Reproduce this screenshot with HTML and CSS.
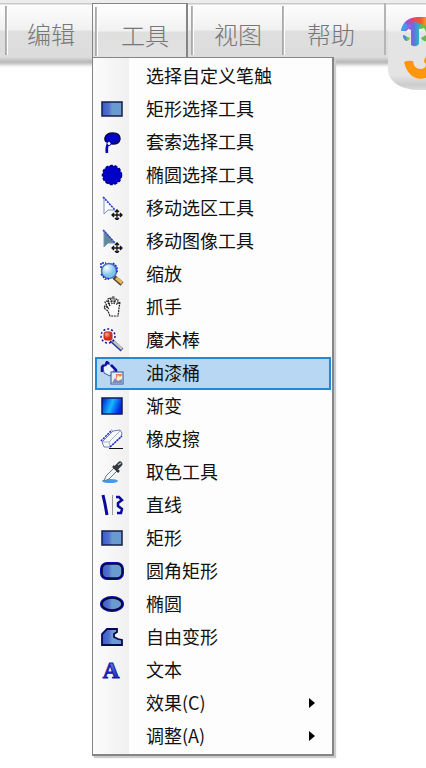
FILE: index.html
```
<!DOCTYPE html>
<html lang="zh-CN">
<head>
<meta charset="utf-8">
<title>工具</title>
<link rel="stylesheet" href="styles.css">
</head>
<body>
<svg class="defs" aria-hidden="true">
  <defs>
    <linearGradient id="blue"><stop offset="0" stop-color="#2f5fd0"/><stop offset=".35" stop-color="#5670cc"/><stop offset=".5" stop-color="#6a9bd0"/><stop offset="1" stop-color="#6a9bd0"/></linearGradient>
    <linearGradient id="fill" x2="1" y2=".3"><stop offset="0" stop-color="#0018d8"/><stop offset=".55" stop-color="#18b8ff"/><stop offset="1" stop-color="#0028e0"/></linearGradient>
    <radialGradient id="lens" cx=".35" cy=".3"><stop offset="0" stop-color="#fff"/><stop offset="1" stop-color="#7ec4f2"/></radialGradient>
    <radialGradient id="ball" cx=".35" cy=".3"><stop offset="0" stop-color="#ffb08a"/><stop offset="1" stop-color="#d82818"/></radialGradient>
    <linearGradient id="trunk" x2="1" y2="0"><stop offset="0" stop-color="#b060e0"/><stop offset=".4" stop-color="#6a6ae0"/><stop offset=".7" stop-color="#2fb0c8"/><stop offset="1" stop-color="#49bd48"/></linearGradient>
    <linearGradient id="cap" x2="1" y2="0"><stop offset="0" stop-color="#3fa0f0"/><stop offset=".25" stop-color="#9a50e0"/><stop offset=".5" stop-color="#e04868"/><stop offset=".8" stop-color="#f05a30"/><stop offset="1" stop-color="#f79a20"/></linearGradient>
    <linearGradient id="letter" x2="0" y2="1"><stop offset="0" stop-color="#6fa0e0"/><stop offset="1" stop-color="#0808b8"/></linearGradient>
  </defs>
</svg>
<header class="bar">
  <nav class="tabs">
    <span class="edge"></span>
    <button class="tab tab-edit">编辑</button>
    <div class="open">
      <button class="tab tab-tools" aria-expanded="true">工具</button>
      <ul class="menu">
        <li><button class="item"><span class="icon"></span>选择自定义笔触</button></li>
        <li><button class="item"><svg class="icon" viewBox="0 0 24 24"><rect x="2" y="5" width="20" height="14" fill="url(#blue)" stroke="#151c48" stroke-width="1.5"/></svg>矩形选择工具</button></li>
        <li><button class="item"><svg class="icon" viewBox="0 0 24 24"><path d="M8 14Q6 18 7 23" fill="none" stroke="#0000b0" stroke-width="2.500"/><path d="M5 8Q6 3 13 3Q20 3 20 9Q19 14 13 14Q10 14 10 12Q4 13 5 8Z" fill="#0000c8" stroke="#080848" stroke-width="1.5"/><circle cx="9" cy="13.500" r="2" fill="#fff" stroke="#0000a0"/></svg>套索选择工具</button></li>
        <li><button class="item"><svg class="icon" viewBox="0 0 24 24"><circle cx="12" cy="12" r="9.500" fill="#0000c8"/><circle cx="12" cy="12" r="9.500" fill="none" stroke="#000088" stroke-width="1.500" stroke-dasharray="3 1.700"/></svg>椭圆选择工具</button></li>
        <li><button class="item"><svg class="icon" viewBox="0 0 24 24"><path d="M4 1V18L8 14L15 14Z" fill="#fff" stroke="#7894bc"/><path d="M3 1L15 14" stroke="#3040e0" stroke-width="1.500" stroke-dasharray="2 1"/><path d="M17 14V24M12 19H22M15 16L17 14L19 16M15 22L17 24L19 22M14 17L12 19L14 21M20 17L22 19L20 21" fill="none" stroke="#111" stroke-width="1.300"/></svg>移动选区工具</button></li>
        <li><button class="item"><svg class="icon" viewBox="0 0 24 24"><path d="M4 1V18L8 14L15 14Z" fill="#628896" stroke="#7894bc"/><path d="M3 1L15 14" stroke="#3040e0" stroke-width="1.500" stroke-dasharray="2 1"/><path d="M17 14V24M12 19H22M15 16L17 14L19 16M15 22L17 24L19 22M14 17L12 19L14 21M20 17L22 19L20 21" fill="none" stroke="#111" stroke-width="1.300"/></svg>移动图像工具</button></li>
        <li><button class="item"><svg class="icon" viewBox="0 0 24 24"><path d="M14 15L22 22" stroke="#4c4030" stroke-width="4.500"/><path d="M16 16L22 21" stroke="#e8b45c" stroke-width="3"/><circle cx="9" cy="9" r="7.500" fill="url(#lens)" stroke="#4c70b8" stroke-width="1.500"/><path d="M1 6V1H6M13 1L17 5V11M1 12L5 17H9" fill="none" stroke="#1820d0" stroke-width="1.500" stroke-dasharray="2 1"/></svg>缩放</button></li>
        <li><button class="item"><svg class="icon" viewBox="0 0 24 24"><path d="M10 21L8 16L4 13L5 11L8 13L5 7L7 6L10 11L8 4L10 3L12 9V2L14 2L14 9L16 4L18 5L17 9L20 7L19 13L18 21Z" fill="#fff" stroke="#222" stroke-width="1.200" stroke-dasharray="2 .7"/></svg>抓手</button></li>
        <li><button class="item"><svg class="icon" viewBox="0 0 24 24"><path d="M11 12L22 22" stroke="#2838a8" stroke-width="4"/><path d="M11 11L22 21" stroke="#c4c6bc" stroke-width="2.500"/><rect x="4" y="4" width="8" height="8" rx="2" fill="url(#ball)" stroke="#c02828"/><circle cx="8" cy="8" r="7" fill="none" stroke="#18189c" stroke-width="1.500" stroke-dasharray="2 2"/></svg>魔术棒</button></li>
        <li><button class="item selected"><svg class="icon" viewBox="0 0 24 24"><path d="M3 6L8 2L15 8L10 15L4 12Z" fill="#e8f3ff" stroke="#4058b0"/><path d="M2 11V6L4 4M5 5L7 1L9 3M11 4L16 9V12" fill="none" stroke="#1010a0" stroke-width="2.500"/><rect x="11" y="11" width="12" height="12" fill="#e9e9ef" stroke="#34529c"/><path d="M16 13H22V18H16Z" fill="#ef8048"/><path d="M18 14L20 16L22 14V19H16Z" fill="#fff2cc"/><path d="M12 22L15 17L18 20L22 18V22Z" fill="#7a8cb8"/></svg>油漆桶</button></li>
        <li><button class="item"><svg class="icon" viewBox="0 0 24 24"><rect x="2" y="4" width="20" height="16" fill="url(#fill)" stroke="#101c58" stroke-width="1.500"/></svg>渐变</button></li>
        <li><button class="item"><svg class="icon" viewBox="0 0 24 24"><path d="M2 15L13 4L20 3L22 6L21 10L10 20H4Z" fill="#f6f7fa" stroke="#6b7fb0"/><path d="M3 15L9 15L20 4M9 15L10 19" fill="none" stroke="#a7b2c8"/><path d="M1 14L12 3M10 20L22 9" stroke="#2028c8" stroke-width="1.500" stroke-dasharray="2 1"/><path d="M9 21.500H23" stroke="#111"/></svg>橡皮擦</button></li>
        <li><button class="item"><svg class="icon" viewBox="0 0 24 24"><ellipse cx="10" cy="21" rx="8" ry="2" fill="#3f9af0"/><path d="M4 21L6 16L15 7L18 10L9 19Z" fill="#f4f7f8" stroke="#667884"/><path d="M13 6L19 12" stroke="#333" stroke-width="2.500"/><path d="M17 7L20 4" stroke="#333940" stroke-width="5" stroke-linecap="round"/><path d="M18 5L21 3" stroke="#aab6be" stroke-width="1.500"/></svg>取色工具</button></li>
        <li><button class="item"><svg class="icon" viewBox="0 0 24 24"><path d="M3 2L5 11L7 22" fill="none" stroke="#0a0a98" stroke-width="3"/><path d="M12.500 2V22" stroke="#999"/><path d="M16 4H19L22 7L18 10V13L22 16L21 20H17" fill="none" stroke="#0a0a98" stroke-width="2.500"/></svg>直线</button></li>
        <li><button class="item"><svg class="icon" viewBox="0 0 24 24"><rect x="2" y="5" width="20" height="14" fill="url(#blue)" stroke="#151c48" stroke-width="1.5"/></svg>矩形</button></li>
        <li><button class="item"><svg class="icon" viewBox="0 0 24 24"><rect x="1" y="4" width="22" height="16" rx="6" fill="url(#blue)" stroke="#0808a8" stroke-width="2"/><rect x="2" y="5" width="20" height="14" rx="5" fill="none" stroke="#080830" stroke-width="1.500"/></svg>圆角矩形</button></li>
        <li><button class="item"><svg class="icon" viewBox="0 0 24 24"><ellipse cx="12" cy="12" rx="11" ry="7" fill="url(#blue)" stroke="#0808a8" stroke-width="2"/><ellipse cx="12" cy="12" rx="10" ry="6" fill="none" stroke="#080830" stroke-width="1.500"/></svg>椭圆</button></li>
        <li><button class="item"><svg class="icon" viewBox="0 0 24 24"><path d="M2 20V9L7 4H17V7L14 9V12L18 14L22 15V20Z" fill="url(#blue)" stroke="#080850" stroke-width="1.800"/></svg>自由变形</button></li>
        <li><button class="item"><svg class="icon" viewBox="0 0 24 24"><text class="glyph" x="11" y="20" text-anchor="middle" fill="url(#letter)" stroke="#1414b4">A</text></svg>文本</button></li>
        <li><button class="item"><span class="icon"></span>效果(C)<svg class="arrow" viewBox="0 0 6 10"><path d="M0 0L6 5L0 10Z"/></svg></button></li>
        <li><button class="item"><span class="icon"></span>调整(A)<svg class="arrow" viewBox="0 0 6 10"><path d="M0 0L6 5L0 10Z"/></svg></button></li>
      </ul>
    </div>
    <button class="tab tab-view">视图</button>
    <button class="tab tab-help">帮助</button>
  </nav>
  <div class="brand">
    <svg class="logo" viewBox="0 0 38 87" aria-hidden="true">
      <path d="M13 28Q15 15 29 14H38V24L33 23L27 19L21 23Q20 29 16 28Z" fill="url(#cap)"/>
      <path d="M13 28Q14 22 18 20L20 24L16 28Z" fill="#3f9ff0"/>
      <path d="M18 25Q21 19 27 19Q34 20 36 25L31 26V41Q28 45 23 42V27Z" fill="url(#trunk)"/>
      <path d="M31 26L36 25L38 29V22L33 21Z" fill="#69c045"/>
      <path d="M15 32L22 35Q21 38 18 38Q15 36 15 32Z" fill="#7ac443"/>
      <path d="M15 32L18 33L19 38Q15 37 15 32Z" fill="#4a88e0"/>
      <path d="M33 35L38 32V38Q35 39 33 35Z" fill="#68b852"/>
      <path d="M16 59Q20 57 25 58Q26 67 34 66Q38 65 38 61Q34 58 38 54V75Q21 79 16 59Z" fill="#ff960c"/>
    </svg>
  </div>
</header>
</body>
</html>
```
FILE: styles.css
```
* { box-sizing: border-box; }
body { margin: 0; min-height: 100vh; background: #fff; font-family: "Noto Sans CJK SC", sans-serif; }
button { font: inherit; border: 0; background: none; padding: 0; margin: 0; }
.defs { position: absolute; width: 0; height: 0; }
.bar { display: flex; height: 68px; padding-top: 3px; background: linear-gradient(#ededed 3px, #c9c9c9 3px, #c9c9c9 4px, #fdfdfd 5px, #f1f1f1 30px, #dfdfdf 31px, #dcdcdc 57px, #b8b8b8 62px, #cfcfcf 64px, #f0f0f0 66px, #fff); }
.tabs { display: flex; flex: none; }
.edge { width: 5px; }
.tab { position: relative; height: 54px; font-size: 24px; line-height: 36px; color: #777; padding-bottom: 4px; padding-top: 12px; text-align: left; font-weight: 300; }
.tab::before { content: ""; position: absolute; left: 0; top: 3px; bottom: 2px; width: 3px; background: linear-gradient(90deg, #a9a9a9 1px, #c5c5c5 2px, #fff 2px); }
.tab-edit { width: 87px; padding-left: 22px; }
.open { position: relative; width: 96px; }
.tab-tools { width: 96px; height: 55px; padding-left: 28px; border: 1px solid #858585; border-bottom: 0; border-right-width: 2px; background: linear-gradient(#fff, #f1f1f1 27px, #dfdfdf 28px, #e2e2e2 53px, #fcfcfc 53px); }
.tab-tools::before { left: 2px; }
.tab-view { width: 94px; padding-left: 26px; }
.tab-view::before { left: 3px; }
.tab-help { width: 102px; padding-left: 25px; }
.brand { flex: 1; min-width: 0; border-left: 2px solid #b5b5b5; height: 52px; }
.logo { display: block; width: 38px; height: 87px; margin-left: 2px; background: linear-gradient(#c9c9c9 1px, #fdfdfd 2px, #f1f1f1 27px, #e4e4e4 30px, #e4e4e4 72px, #ccc 82px, #ddd); border-bottom-left-radius: 30px 20px; }
.menu { position: absolute; z-index: 2; left: 0; top: 54px; width: 242px; margin: 0; padding: 2px 1px 1px 2px; list-style: none; border: 1px solid #858585; border-right-width: 2px; border-bottom-width: 2px; background: linear-gradient(90deg, #fcfcfc 0, #f0f0f0 36px, #fdfdfd 36px); box-shadow: 2px 2px 1px #ccc; }
.item { display: flex; align-items: center; gap: 22px; width: 100%; height: 33px; padding: 0 0 2px 5px; font-size: 18px; line-height: 27px; color: #111; text-align: left; position: relative; }
.selected { border: 2px solid #2189d9; background: #b7d7f2; padding-left: 3px; }
.icon { display: block; width: 24px; height: 24px; flex: none; }
.glyph { font: bold 23px "Liberation Serif", serif; }
.arrow { width: 6px; height: 10px; margin-left: auto; margin-right: 16px; fill: #000; }
```
